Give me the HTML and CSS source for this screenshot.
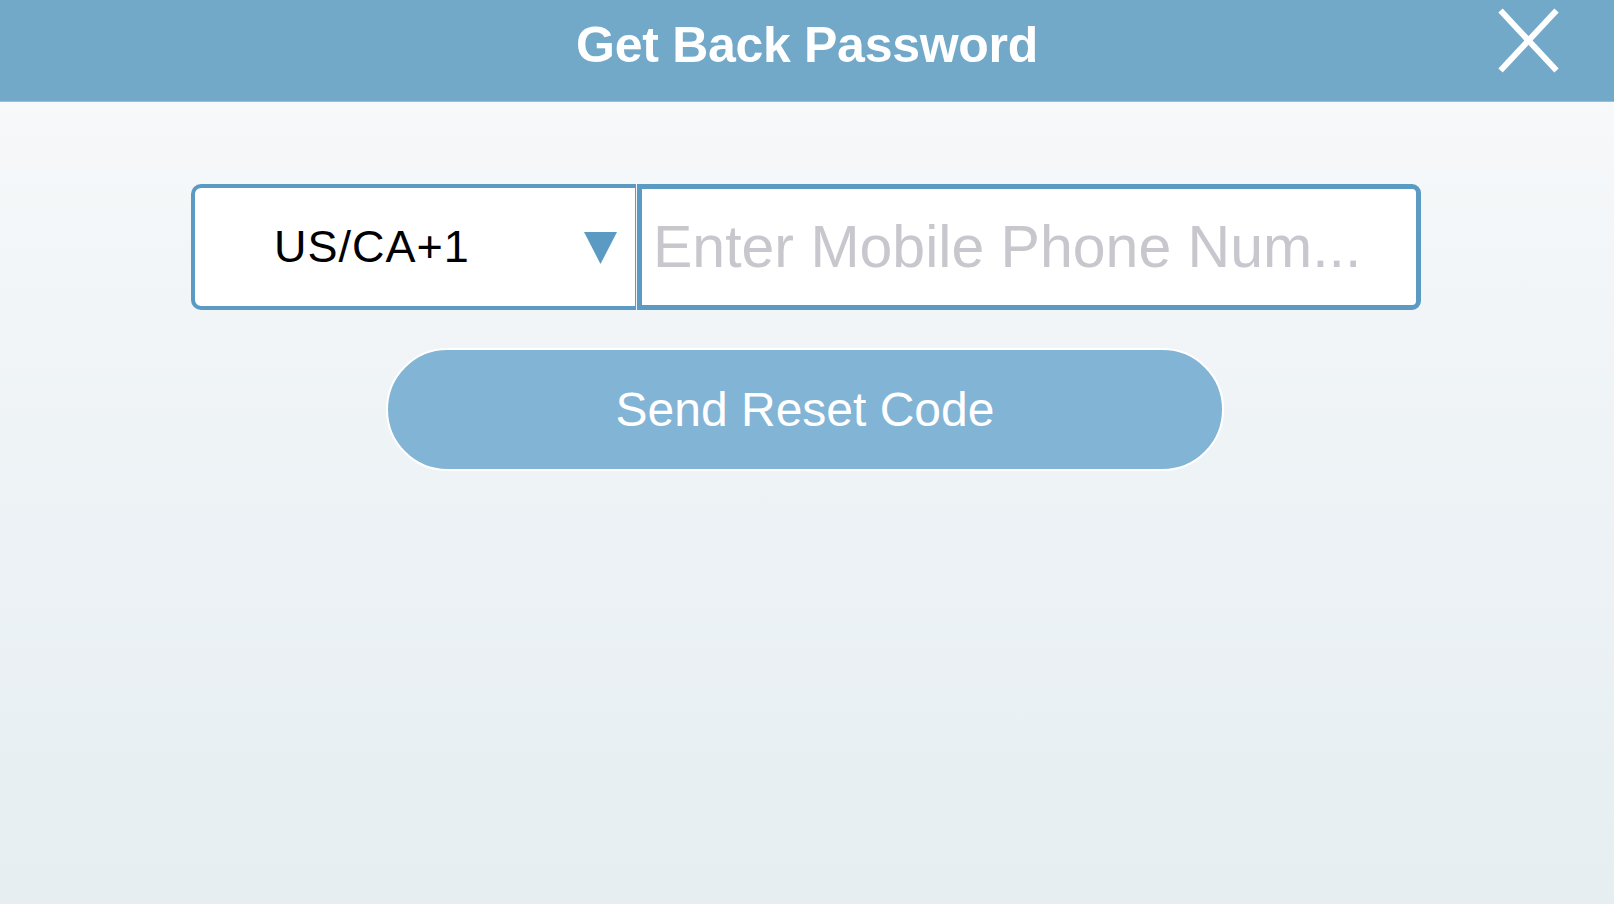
FILE: index.html
```html
<!DOCTYPE html>
<html lang="en">
<head>
<meta charset="utf-8">
<title>Get Back Password</title>
<link rel="stylesheet" href="styles.css">
</head>
<body>
<div class="screen">
  <header class="topbar">
    <div class="topbar-side"></div>
    <h1 class="title">Get Back Password</h1>
    <div class="topbar-side topbar-right">
      <button class="close" aria-label="Close">
        <svg width="63" height="67" viewBox="0 0 63 67">
          <line x1="3.5" y1="3.5" x2="59.5" y2="63.5" stroke="#fff" stroke-width="6"/>
          <line x1="59.5" y1="3.5" x2="3.5" y2="63.5" stroke="#fff" stroke-width="6"/>
        </svg>
      </button>
    </div>
  </header>
  <main class="content">
    <div class="phone-row">
      <div class="country">
        <span class="country-code">US/CA+1</span>
        <svg class="caret" width="33" height="32" viewBox="0 0 33 32"><polygon points="0,0 33,0 16.5,32" fill="#5b9bc3"/></svg>
      </div>
      <input class="phone" type="tel" placeholder="Enter Mobile Phone Num...">
    </div>
    <button class="send">Send Reset Code</button>
  </main>
</div>
</body>
</html>
```
FILE: styles.css
```css
html, body {
  margin: 0;
  padding: 0;
  height: 100%;
}
body {
  font-family: "Liberation Sans", Arial, sans-serif;
}
.screen {
  height: 904px;
  display: flex;
  flex-direction: column;
  background: linear-gradient(to bottom, #f9fafb 0%, #eef3f6 50%, #e6eef2 100%);
}
.topbar {
  height: 101px;
  flex: none;
  background: #72a8c8;
  border-bottom: 1px solid #a8b8c2;
  display: grid;
  grid-template-columns: 1fr auto 1fr;
  align-items: start;
}
.title {
  margin: 0;
  padding-top: 15px;
  color: #fff;
  font-size: 50px;
  font-weight: bold;
  line-height: 60px;
  letter-spacing: -0.3px;
  text-align: center;
}
.topbar-right {
  display: flex;
  justify-content: flex-end;
  padding-right: 54px;
  padding-top: 7px;
}
.close {
  border: 0;
  background: none;
  padding: 0;
  width: 63px;
  height: 67px;
  display: block;
}
.close svg { display: block; }
.content {
  display: flex;
  flex-direction: column;
  align-items: center;
  padding-top: 82px;
}
.phone-row {
  display: flex;
  width: 1230px;
  height: 126px;
  gap: 1px;
  margin-left: -2px;
}
.country {
  box-sizing: border-box;
  width: 445px;
  height: 126px;
  border: 4px solid #5b9bc3;
  border-right-width: 1px;
  border-radius: 10px 0 0 10px;
  background: #fff;
  display: flex;
  align-items: center;
  justify-content: space-between;
  padding: 0 18px 0 79px;
}
.country-code {
  font-size: 45px;
  letter-spacing: 1px;
  color: #000;
}
.caret {
  display: block;
  margin-top: 2px;
}
.phone {
  box-sizing: border-box;
  flex: 1;
  height: 126px;
  border: 5px solid #5b9bc3;
  border-radius: 0 9px 9px 0;
  background: #fff;
  padding: 0 0 0 11px;
  font-family: "Liberation Sans", Arial, sans-serif;
  font-size: 59px;
  color: #000;
  outline: none;
  margin: 0;
}
.phone::placeholder {
  color: #c7c7cd;
  opacity: 1;
}
.send {
  margin-top: 38px;
  margin-left: -4px;
  box-sizing: border-box;
  width: 838px;
  height: 123px;
  border: 2px solid #fff;
  border-radius: 62px;
  background: #82b4d5;
  color: #fff;
  font-family: "Liberation Sans", Arial, sans-serif;
  font-size: 48px;
  padding: 0;
}
```
